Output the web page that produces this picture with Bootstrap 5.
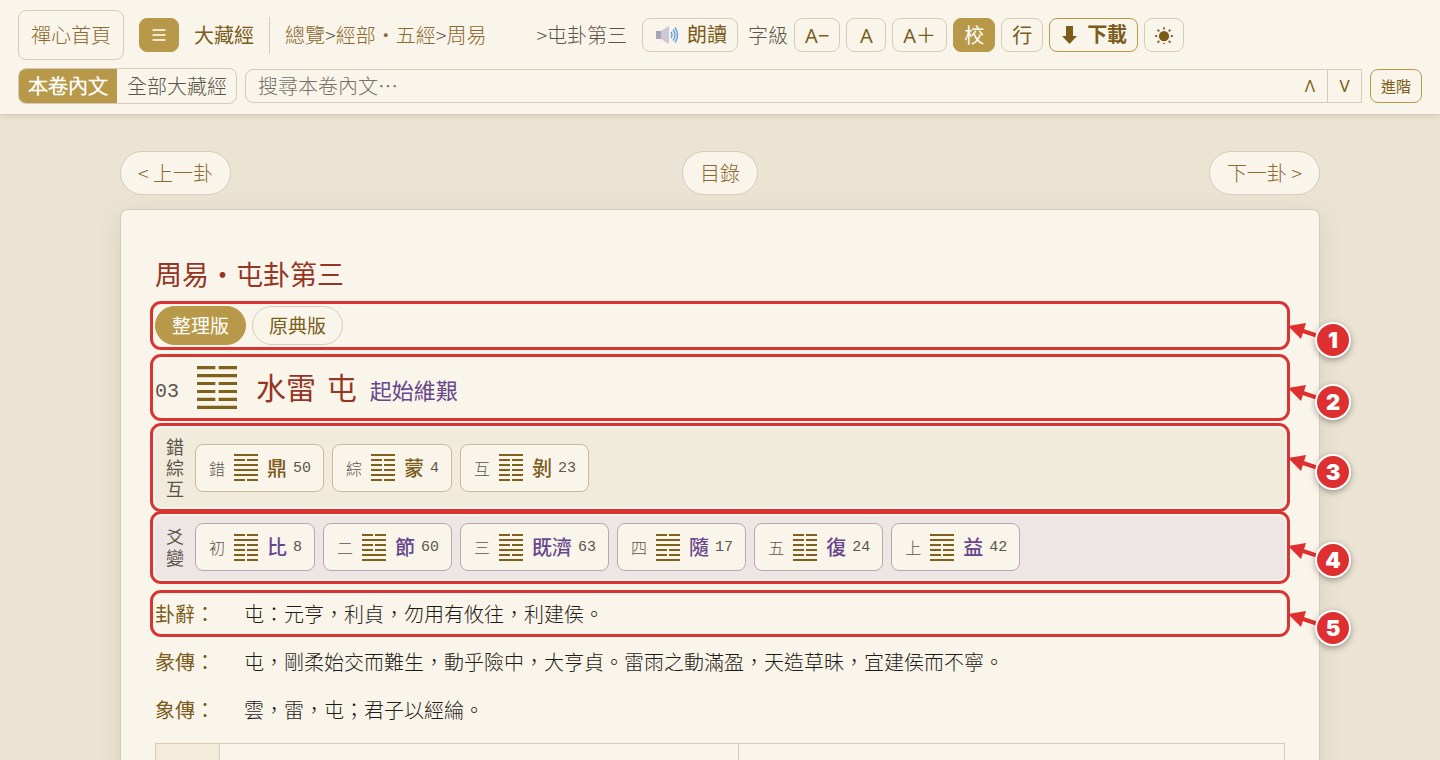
<!DOCTYPE html>
<html lang="zh-Hant">
<head>
<meta charset="utf-8">
<meta name="viewport" content="width=device-width, initial-scale=1">
<title>周易・屯卦第三</title>
<link rel="stylesheet" href="https://cdn.jsdelivr.net/npm/bootstrap@5.3.0/dist/css/bootstrap.min.css">
<style>
:root{--paper:#faf5ea;--line:#d6ccb9;--gold:#b8994a;--brown:#7a5c1b;--link:#8a682f;--ink:#5a554a;--red:#963526;--purple:#67478c;--mark:#d93434;--light:"Noto Sans CJK TC Light","Noto Sans CJK TC",sans-serif;--regular:"Noto Sans CJK TC",sans-serif}
body{background:#ebe4d4;color:#1d1b17;font-family:var(--light);font-size:20px;line-height:30px;font-weight:300}
a{color:var(--link);text-decoration:none}
.site-head{background:var(--paper);border-bottom:1px solid var(--line);box-shadow:0 1px 6px rgba(90,70,30,.14);padding:10px 18px;z-index:2}
.head-tools{min-height:50px;gap:15px}
.tool-group{gap:6px}
.tool-btn{--bs-btn-padding-x:10px;--bs-btn-padding-y:0;--bs-btn-font-size:20px;--bs-btn-line-height:34px;--bs-btn-border-radius:8px;--bs-btn-color:var(--brown);--bs-btn-border-color:var(--line);--bs-btn-hover-color:var(--brown);--bs-btn-hover-border-color:var(--gold);font-family:"Noto Sans",var(--regular);height:34px;min-width:40px;font-weight:400;white-space:nowrap}
.tool-btn.is-on{background:var(--gold);border-color:var(--gold);color:#fff}
.tool-btn.is-strong{border-color:var(--gold);font-weight:700}
.read-btn{padding:0 10px 0 12px}
.home-btn{height:50px;line-height:48px;padding:0 12px;font-family:var(--light);font-weight:300;color:var(--link)}
.brand{color:var(--brown);font-family:var(--regular);font-weight:400}
.rule{width:1px;height:37px;background:var(--line)}
.trail{color:var(--ink);white-space:nowrap}
.trail-end{margin-left:50px}
.seg{border:1px solid var(--line);border-radius:8px;overflow:hidden}
.seg button{border:0;background:none;color:var(--ink);height:34px;padding:0 9px;line-height:32px;font-weight:300;white-space:nowrap}
.seg button+button{padding:0 9px 0 10px}
.seg button.is-on{background:var(--gold);color:#fff;font-weight:700}
.find{height:34px;border:1px solid var(--line);border-radius:8px 0 0 8px}
.find input{background:none;border:0;font-size:20px;font-weight:300;padding:0 12px;color:var(--ink)}
.find input::placeholder{color:#75726c}
.find button{width:34px;border:0;background:none;color:var(--brown);font-size:17px;font-family:"Noto Sans",sans-serif;line-height:30px;padding:0}
.find button+button{border-left:1px solid var(--line)}
.adv-btn{font-size:15px;line-height:32px;width:52px;padding:0;border-color:var(--gold)}
.reader{min-height:0;overflow-y:auto;scrollbar-width:none}
.reader::-webkit-scrollbar{display:none}
.sheet-wrap{max-width:1200px;margin:36px auto 0}
.page-pill{height:44px;border-radius:22px;line-height:42px;padding:0 17px;background:var(--paper);border:1px solid var(--line)}
.sheet{background:var(--paper);border:1px solid var(--line);border-radius:8px;padding:48px 34px;margin-top:14px;box-shadow:0 6px 26px rgba(90,70,30,.12)}
h1{font-family:var(--regular);font-size:27px;line-height:32px;color:var(--red);font-weight:400;margin:0 0 16px}
.marked{position:relative;outline:3px solid var(--mark);outline-offset:2px;border-radius:6px}
.tag{position:absolute;left:100%;top:min(50%,30px);width:66px;height:36px;pointer-events:none}
.tag svg{position:absolute;left:3px;top:-8px}
.tag b{position:absolute;left:30px;top:-4px;width:36px;height:36px;border-radius:50%;border:2px solid #fff;background:#de3030;color:#fff;font:900 22px/32px Inter,sans-serif;text-align:center;box-shadow:0 2px 6px rgba(0,0,0,.35)}
.ver-row{gap:6px;margin-bottom:14px}
.ver-btn{height:39px;border-radius:20px;font-size:19px;line-height:38px;padding:0 16px}
.gua-head{height:57px;margin-bottom:12px}
.num{font-family:"Liberation Mono",monospace;color:var(--ink);font-weight:400}
.gua-head .hexa{margin:0 19px 0 18px}
.gua-text{gap:13px}
.gua-name{font-family:var(--regular);font-size:30px;line-height:46px;color:var(--red);font-weight:400;white-space:pre}
.gua-key{font-family:var(--regular);font-size:22px;font-weight:400;color:var(--purple)}
.hexa{fill:none;stroke:#7f611c;stroke-width:2;flex:none}
.band{background:#f1ebdb;padding:8px 10px;gap:8px;margin-bottom:9px}
.band-pale{background:#eee6e5;padding-top:7px;margin-bottom:16px}
.band-label{width:20px;margin-right:2px;font-family:var(--regular);font-size:18px;font-weight:400;line-height:21px;color:var(--ink);text-align:center}
.chip{height:48px;border:1px solid #c9bb95;border-radius:8px;background:var(--paper);padding:0 12px 0 13px;gap:6px;color:var(--brown);font-family:var(--regular);font-weight:500}
.chip .hexa{margin:0 3px}
.chip small{font-size:16px;line-height:24px;font-family:var(--light);font-weight:300;color:var(--ink)}
.chip .num{font-size:15px;padding-top:2px}
.band-pale .chip{border-color:#b8a8ae;color:var(--purple)}
.verses{gap:11px;margin-bottom:15px}
.verse{min-height:37px}
.verse dt{flex:0 0 89px;color:var(--brown);font-family:var(--regular);font-weight:400}
.verse dd{margin:0}
.lines-table{table-layout:fixed;border-color:var(--line);margin:0}
.lines-table>:not(caption)>*>*{background:none;border:1px solid var(--line);height:56px}
.lines-table th:first-child{width:64px;background:#f3ecdb}
.lines-table .c-left{width:46%}
</style>
</head>
<body class="vh-100 d-flex flex-column">
<header class="site-head d-flex flex-column gap-2">
  <div class="head-tools d-flex align-items-center">
    <a class="btn tool-btn home-btn" href="#">禪心首頁</a>
    <button class="btn tool-btn is-on px-0 d-flex align-items-center" aria-label="選單">
      <svg width="38" height="16" viewBox="0 0 38 16" fill="none" stroke="#fff" stroke-width="1.3"><path d="M12.500 3h13M12.500 8h13M12.500 13h13"/></svg>
    </button>
    <a class="brand" href="#">大藏經</a>
    <span class="rule"></span>
    <nav class="trail d-flex" aria-label="路徑">
      <a href="#">總覽</a><span>&gt;</span><a href="#">經部・五經</a><span>&gt;</span><a href="#">周易</a>
      <span class="trail-end">&gt;屯卦第三</span>
    </nav>
    <div class="tool-group d-flex align-items-center">
      <button class="btn tool-btn read-btn me-1 d-flex align-items-center gap-2">
        <svg width="24" height="20" viewBox="0 0 24 20"><path d="M1 6h5l8-5v18l-8-5H1z" fill="#cdc7d6"/><path d="M1 6h5v8H1z" fill="#a9a4b5"/><path d="M16 7q2 3 0 6M18 4.500q4 5.500 0 11M20 2.500q5 7.500 0 15" fill="none" stroke="#5b9fe0" stroke-width="1.400"/></svg>朗讀</button>
      <span class="trail">字級</span>
      <button class="btn tool-btn">A−</button>
      <button class="btn tool-btn">A</button>
      <button class="btn tool-btn">A＋</button>
      <button class="btn tool-btn is-on">校</button>
      <button class="btn tool-btn">行</button>
      <button class="btn tool-btn is-strong d-flex align-items-center gap-2"><svg width="19" height="20" viewBox="-2 0 19 20"><path d="M4 1h7v10h4l-7.500 8L0 11h4z" fill="#7a5c1b"/></svg>下載</button>
      <button class="btn tool-btn d-flex align-items-center" aria-label="日間模式"><svg width="18" height="18" viewBox="0 -1 16 16" stroke="#7a5c1b" stroke-width="1.500"><circle cx="8" cy="8" r="3.800" fill="#7a5c1b"/><path d="M8 0v2M8 14v2M0 8h2M14 8h2M2.300 2.300l1.500 1.500M12.200 12.200l1.500 1.500M13.700 2.300l-1.500 1.500M3.800 12.200l-1.500 1.500"/></svg></button>
    </div>
  </div>
  <div class="d-flex align-items-center gap-2">
    <div class="seg d-flex flex-shrink-0"><button class="is-on">本卷內文</button><button>全部大藏經</button></div>
    <div class="find d-flex flex-grow-1">
      <input class="flex-grow-1" type="search" placeholder="搜尋本卷內文⋯" aria-label="搜尋本卷內文">
      <button aria-label="上一個">Λ</button><button aria-label="下一個">V</button>
    </div>
    <button class="btn tool-btn adv-btn">進階</button>
  </div>
</header>

<div class="reader flex-grow-1">
<main class="sheet-wrap">
  <nav class="d-flex justify-content-between" aria-label="卦頁">
    <a class="page-pill" href="#">&lt; 上一卦</a>
    <a class="page-pill" href="#">目錄</a>
    <a class="page-pill" href="#">下一卦 &gt;</a>
  </nav>
  <article class="sheet">
    <h1>周易・屯卦第三</h1>

    <div class="marked d-flex ver-row">
      <button class="btn tool-btn ver-btn is-on">整理版</button>
      <button class="btn tool-btn ver-btn">原典版</button>
      <span class="tag"><svg width="36" height="24" viewBox="0 0 36 24"><path d="M0 8l18-3-5 16z" fill="#de3030"/><path d="M12 12l18 6" stroke="#de3030" stroke-width="4"/></svg><b>1</b></span>
    </div>

    <div class="marked gua-head d-flex align-items-center">
      <span class="num pt-2">03</span>
      <svg class="hexa" width="40" height="43" viewBox="0 0 24 27" preserveAspectRatio="none"><path d="M0 1h11m2 0h11M0 6h24M0 11h11m2 0h11M0 16h11m2 0h11M0 21h11m2 0h11M0 26h24"/></svg>
      <span class="gua-text d-flex align-items-baseline pb-1"><strong class="gua-name">水雷 <span class="ps-1">屯</span></strong><span class="gua-key">起始維艱</span></span>
      <span class="tag"><svg width="36" height="24" viewBox="0 0 36 24"><path d="M0 8l18-3-5 16z" fill="#de3030"/><path d="M12 12l18 6" stroke="#de3030" stroke-width="4"/></svg><b>2</b></span>
    </div>

    <div class="marked band d-flex align-items-center">
      <div class="band-label">錯綜互</div>
      <a class="chip d-flex align-items-center" href="#"><small>錯</small><svg class="hexa" width="24" height="27"><path d="M0 1h24M0 6h11m2 0h11M0 11h24M0 16h24M0 21h24M0 26h11m2 0h11"/></svg>鼎<span class="num">50</span></a>
      <a class="chip d-flex align-items-center" href="#"><small>綜</small><svg class="hexa" width="24" height="27"><path d="M0 1h24M0 6h11m2 0h11M0 11h11m2 0h11M0 16h11m2 0h11M0 21h24M0 26h11m2 0h11"/></svg>蒙<span class="num">4</span></a>
      <a class="chip d-flex align-items-center" href="#"><small>互</small><svg class="hexa" width="24" height="27"><path d="M0 1h24M0 6h11m2 0h11M0 11h11m2 0h11M0 16h11m2 0h11M0 21h11m2 0h11M0 26h11m2 0h11"/></svg>剝<span class="num">23</span></a>
      <span class="tag"><svg width="36" height="24" viewBox="0 0 36 24"><path d="M0 8l18-3-5 16z" fill="#de3030"/><path d="M12 12l18 6" stroke="#de3030" stroke-width="4"/></svg><b>3</b></span>
    </div>

    <div class="marked band band-pale d-flex align-items-center">
      <div class="band-label">爻變</div>
      <a class="chip d-flex align-items-center" href="#"><small>初</small><svg class="hexa" width="24" height="27"><path d="M0 1h11m2 0h11M0 6h24M0 11h11m2 0h11M0 16h11m2 0h11M0 21h11m2 0h11M0 26h11m2 0h11"/></svg>比<span class="num">8</span></a>
      <a class="chip d-flex align-items-center" href="#"><small>二</small><svg class="hexa" width="24" height="27"><path d="M0 1h11m2 0h11M0 6h24M0 11h11m2 0h11M0 16h11m2 0h11M0 21h24M0 26h24"/></svg>節<span class="num">60</span></a>
      <a class="chip d-flex align-items-center" href="#"><small>三</small><svg class="hexa" width="24" height="27"><path d="M0 1h11m2 0h11M0 6h24M0 11h11m2 0h11M0 16h24M0 21h11m2 0h11M0 26h24"/></svg>既濟<span class="num">63</span></a>
      <a class="chip d-flex align-items-center" href="#"><small>四</small><svg class="hexa" width="24" height="27"><path d="M0 1h11m2 0h11M0 6h24M0 11h24M0 16h11m2 0h11M0 21h11m2 0h11M0 26h24"/></svg>隨<span class="num">17</span></a>
      <a class="chip d-flex align-items-center" href="#"><small>五</small><svg class="hexa" width="24" height="27"><path d="M0 1h11m2 0h11M0 6h11m2 0h11M0 11h11m2 0h11M0 16h11m2 0h11M0 21h11m2 0h11M0 26h24"/></svg>復<span class="num">24</span></a>
      <a class="chip d-flex align-items-center" href="#"><small>上</small><svg class="hexa" width="24" height="27"><path d="M0 1h24M0 6h24M0 11h11m2 0h11M0 16h11m2 0h11M0 21h11m2 0h11M0 26h24"/></svg>益<span class="num">42</span></a>
      <span class="tag"><svg width="36" height="24" viewBox="0 0 36 24"><path d="M0 8l18-3-5 16z" fill="#de3030"/><path d="M12 12l18 6" stroke="#de3030" stroke-width="4"/></svg><b>4</b></span>
    </div>

    <div class="verses d-flex flex-column">
      <dl class="marked verse d-flex align-items-center m-0"><dt>卦辭：</dt><dd>屯：元亨，利貞，勿用有攸往，利建侯。</dd>
        <dd class="tag"><svg width="36" height="24" viewBox="0 0 36 24"><path d="M0 8l18-3-5 16z" fill="#de3030"/><path d="M12 12l18 6" stroke="#de3030" stroke-width="4"/></svg><b>5</b></dd></dl>
      <dl class="verse d-flex align-items-center m-0"><dt>彖傳：</dt><dd>屯，剛柔始交而難生，動乎險中，大亨貞。雷雨之動滿盈，天造草昧，宜建侯而不寧。</dd></dl>
      <dl class="verse d-flex align-items-center m-0"><dt>象傳：</dt><dd>雲，雷，屯；君子以經綸。</dd></dl>
    </div>
    <table class="table lines-table"><tbody><tr><th scope="row"></th><td class="c-left"></td><td></td></tr></tbody></table>
  </article>
</main>
</div>
<script src="https://cdn.jsdelivr.net/npm/bootstrap@5.3.0/dist/js/bootstrap.bundle.min.js"></script>
</body>
</html>
